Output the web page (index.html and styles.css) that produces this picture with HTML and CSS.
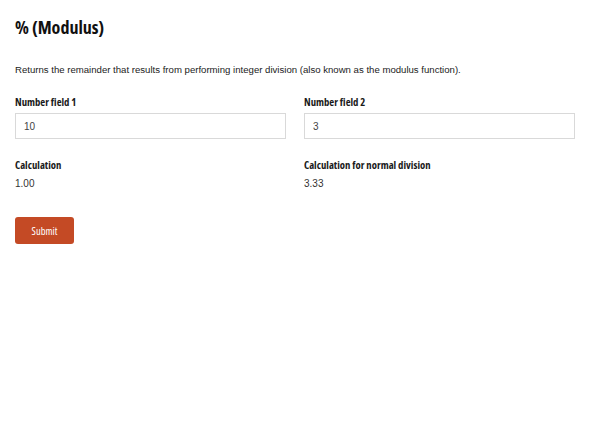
FILE: index.html
```html
<!DOCTYPE html>
<html lang="en">
<head>
    <meta charset="UTF-8">
    <meta name="viewport" content="width=device-width, initial-scale=1.0">
    <title>% (Modulus)</title>
    <link rel="stylesheet" href="styles.css">
</head>
<body>
    <div class="page">
        <h1 class="title">% (Modulus)</h1>
        <p class="intro">Returns the remainder that results from performing integer division (also known as the modulus function).</p>

        <div class="grid">
            <div class="field">
                <label class="label" for="num1">Number field 1</label>
                <input type="text" id="num1" class="input" value="10">
            </div>
            <div class="field">
                <label class="label" for="num2">Number field 2</label>
                <input type="text" id="num2" class="input" value="3">
            </div>
            <div class="field">
                <span class="label">Calculation</span>
                <span class="value">1.00</span>
            </div>
            <div class="field">
                <span class="label">Calculation for normal division</span>
                <span class="value">3.33</span>
            </div>
        </div>

        <button class="submit">Submit</button>
    </div>
</body>
</html>
```

FILE: styles.css
```css
body {
    margin: 0;
    padding: 0;
    background: #fff;
    color: #333;
    font-family: 'Liberation Sans', Arial, sans-serif;
}

.page {
    padding: 15px;
}

.title {
    margin: 0;
    font-family: 'Open Sans', sans-serif;
    font-stretch: 75%;
    font-weight: 700;
    font-size: 18px;
    line-height: 24px;
    color: #111;
}

.intro {
    margin: 24px 0 0;
    font-size: 9.6px;
    line-height: 14px;
    color: #222;
}

.grid {
    display: grid;
    grid-template-columns: 1fr 1fr;
    column-gap: 18px;
    row-gap: 18px;
    margin-top: 17px;
}

.field {
    display: flex;
    flex-direction: column;
}

.label {
    font-family: 'Open Sans', sans-serif;
    font-stretch: 75%;
    font-weight: 700;
    font-size: 10.7px;
    line-height: 16px;
    color: #1a1a1a;
    margin-bottom: 3px;
}

.input {
    box-sizing: border-box;
    height: 26px;
    padding: 0 8px;
    border: 1px solid #d9d9d9;
    font-family: 'Liberation Sans', Arial, sans-serif;
    font-size: 10px;
    color: #444;
    outline: none;
}

.value {
    font-size: 10px;
    line-height: 14px;
    color: #333;
    margin-top: 1px;
}

.submit {
    margin-top: 26px;
    width: 59px;
    height: 27px;
    border: none;
    border-radius: 3px;
    background-color: #c44a25;
    color: #fff;
    font-family: 'Open Sans', sans-serif;
    font-stretch: 75%;
    font-size: 10.5px;
    cursor: pointer;
}
```
